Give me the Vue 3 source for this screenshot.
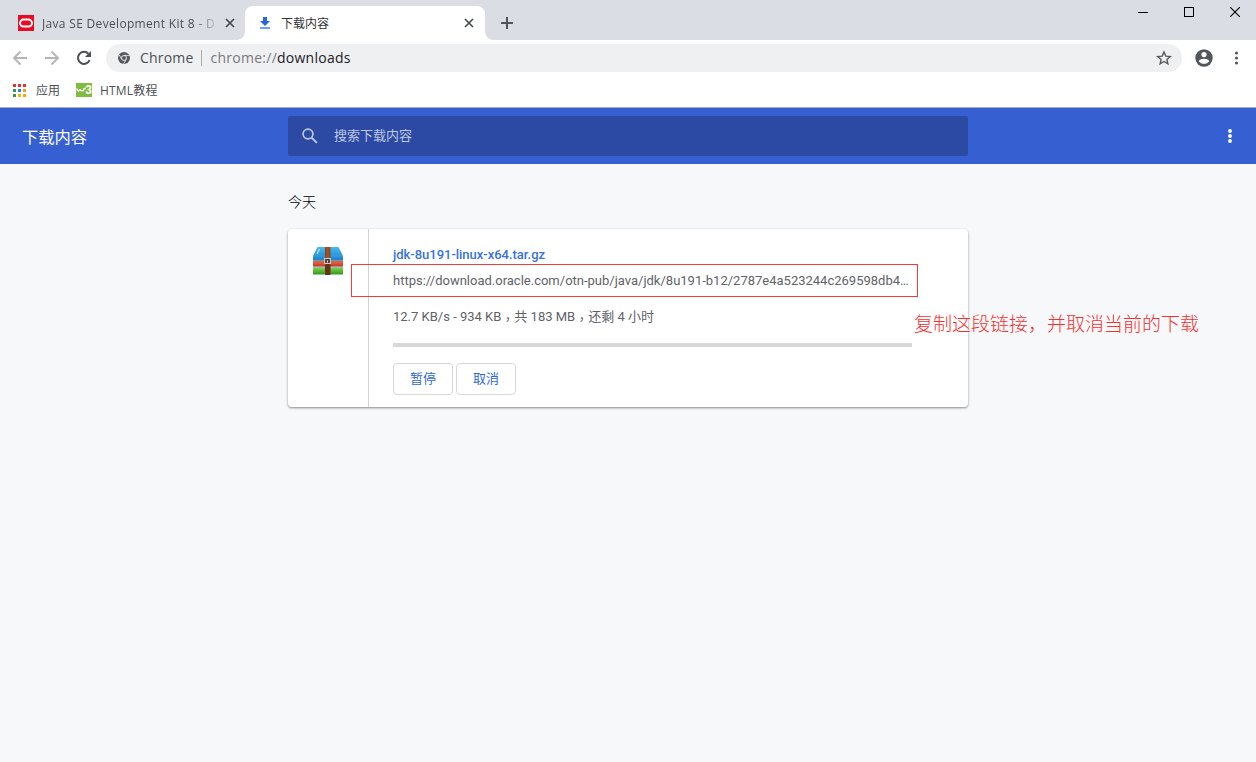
<template>
    <div class="window">
        <div class="tab-strip">
            <div class="tab">
                <svg class="favicon" width="16" height="16" viewBox="0 0 16 16">
                    <rect width="16" height="16" fill="#e60d22" />
                    <rect x="2" y="4.6" width="12" height="7" rx="3.5" fill="none" stroke="#fff" stroke-width="2" />
                </svg>
                <span class="tab-title faded">Java SE Development Kit 8 - D</span>
                <svg class="tab-close" width="10" height="10" viewBox="0 0 10 10">
                    <path d="M1 1l8 8M9 1l-8 8" stroke="#45494d" stroke-width="1.7" />
                </svg>
            </div>
            <div class="tab active">
                <svg class="favicon" width="16" height="16" viewBox="0 0 16 16">
                    <path d="M6 2h4v4h3l-5 5-5-5h3z" fill="#2a66e0" />
                    <path d="M3 12.2h10v1.6H3z" fill="#4d84ec" />
                </svg>
                <span class="tab-title">下载内容</span>
                <svg class="tab-close" width="10" height="10" viewBox="0 0 10 10">
                    <path d="M1 1l8 8M9 1l-8 8" stroke="#45494d" stroke-width="1.6" />
                </svg>
            </div>
            <svg class="new-tab" width="12" height="12" viewBox="0 0 12 12">
                <path d="M6 0v12M0 6h12" stroke="#505357" stroke-width="2" />
            </svg>
            <div class="window-controls">
                <svg width="10" height="10" viewBox="0 0 10 10"><path d="M0 5.5h10" stroke="#000" /></svg>
                <svg width="10" height="10" viewBox="0 0 10 10"><rect x=".5" y=".5" width="9" height="9" fill="none" stroke="#000" /></svg>
                <svg width="10" height="10" viewBox="0 0 10 10"><path d="M0 0l10 10M10 0L0 10" stroke="#000" stroke-width="1.1" /></svg>
            </div>
        </div>

        <div class="toolbar">
            <svg class="nav-btn" width="16" height="16" viewBox="0 0 16 16">
                <path d="M15 8H2M8.5 1.5L2 8l6.5 6.5" fill="none" stroke="#b4b5b7" stroke-width="1.9" />
            </svg>
            <svg class="nav-btn" width="16" height="16" viewBox="0 0 16 16">
                <path d="M1 8h13M7.5 1.5L14 8l-6.5 6.5" fill="none" stroke="#b4b5b7" stroke-width="1.9" />
            </svg>
            <svg class="nav-btn" width="16" height="16" viewBox="0 0 16 16">
                <path d="M13.6 10A6 6 0 1 1 12.4 3.8" fill="none" stroke="#4c5054" stroke-width="2" />
                <path d="M15 1v6H9z" fill="#4c5054" />
            </svg>
            <div class="omnibox">
                <svg width="12" height="12" viewBox="0 0 12 12">
                    <circle cx="6" cy="6" r="6" fill="#565a5e" />
                    <circle cx="6" cy="6" r="2.5" fill="none" stroke="#eff0f2" stroke-width=".9" />
                    <path d="M6 3.4h5.4M3.7 7.2L1.1 2.8M8.2 7.3L5.6 11.8" stroke="#eff0f2" stroke-width=".8" />
                </svg>
                <span class="origin">Chrome</span>
                <span class="separator"></span>
                <span class="url">chrome://<b>downloads</b></span>
                <svg class="star" width="16" height="16" viewBox="0 0 16 16">
                    <path d="M8 2l1.8 4.1 4.5.4-3.4 2.9 1 4.4L8 11.5l-3.9 2.3 1-4.4L1.7 6.5l4.5-.4z" fill="none" stroke="#55595d" stroke-width="1.4" />
                </svg>
            </div>
            <svg class="avatar" width="18" height="18" viewBox="0 0 18 18">
                <circle cx="9" cy="9" r="8.7" fill="#51565b" />
                <circle cx="9" cy="5.6" r="2.6" fill="#fff" />
                <path d="M3.8 12.2c0-3.4 10.4-3.4 10.4 0C11.9 15.6 6.1 15.6 3.8 12.2z" fill="#fff" />
            </svg>
            <svg class="menu" width="5" height="14" viewBox="0 0 5 14">
                <circle v-for="y in dots" :key="y" cx="2.5" :cy="y" r="1.6" fill="#55595d" />
            </svg>
        </div>

        <div class="bookmarks">
            <svg class="apps" width="13" height="13" viewBox="0 0 13 13">
                <rect v-for="(color, i) in appColors" :key="i" :x="(i % 3) * 5" :y="Math.floor(i / 3) * 5" width="3" height="3" :fill="color" />
            </svg>
            <span class="apps-label">应用</span>
            <svg class="w3" width="16" height="14" viewBox="0 0 16 14">
                <rect width="16" height="14" fill="#80bd3e" />
                <path d="M.8 5.5c.4 3 2.700 3 3.300.6.6 2.400 3.200 2.400 4-.4l1.600-.4" fill="none" stroke="#fff" stroke-width="1.5" />
                <text x="9.3" y="11.3" class="w3-digit">3</text>
            </svg>
            <span class="bookmark-label">HTML教程</span>
        </div>

        <div class="page-header">
            <h1>下载内容</h1>
            <div class="search">
                <svg width="18" height="18" viewBox="0 0 18 18">
                    <circle cx="7" cy="7" r="4.9" fill="none" stroke="#bec8e5" stroke-width="1.7" />
                    <path d="M10.6 10.6l5.3 5.3" stroke="#bec8e5" stroke-width="2" />
                </svg>
                <span>搜索下载内容</span>
            </div>
            <svg class="page-menu" width="4" height="14" viewBox="0 0 4 14">
                <circle v-for="y in dots" :key="y" cx="2" :cy="y" r="1.9" fill="#fff" />
            </svg>
        </div>

        <div class="content">
            <h2>今天</h2>
            <div class="card">
                <div class="icon-wrapper">
                    <svg width="32" height="30" viewBox="0 0 32 30">
                        <defs>
                            <linearGradient id="blue" x2="0" y2="1"><stop stop-color="#48b9ee" /><stop offset="1" stop-color="#1b80cb" /></linearGradient>
                            <linearGradient id="red" x2="0" y2="1"><stop stop-color="#ee6a4a" /><stop offset="1" stop-color="#c03a26" /></linearGradient>
                            <linearGradient id="green" x2="0" y2="1"><stop stop-color="#82d34c" /><stop offset="1" stop-color="#309722" /></linearGradient>
                        </defs>
                        <path d="M5.5 1h21L31 10v4.500H1V10z" fill="url(#blue)" />
                        <path d="M1 10h30" stroke="#4db2ea" stroke-width=".5" />
                        <path d="M5 8l2.5-5" stroke="#b6e8ff" stroke-width="1.3" />
                        <path d="M1 15h30v5.500H1z" fill="url(#red)" />
                        <path d="M1 21.500h30V28.500H1z" fill="url(#green)" />
                        <path d="M1 14.800h30M1 21h30" stroke="#59616b" stroke-width=".6" />
                        <path d="M13.300 1h4.700v12h-4.700z" fill="#a3501d" />
                        <path d="M13 13h5.300v16H13z" fill="#66301e" />
                        <path d="M13.500 1v28M18 1v28" stroke="#753713" stroke-width=".7" />
                        <rect x="12.600" y="12.500" width="5.800" height="5" fill="#50372d" stroke="#d2cbc4" stroke-width="1.100" />
                        <path d="M15.500 14.500v2" stroke="#eee" />
                    </svg>
                </div>
                <div class="details">
                    <a class="file-name">jdk-8u191-linux-x64.tar.gz</a>
                    <div class="file-url">https://download.oracle.com/otn-pub/java/jdk/8u191-b12/2787e4a523244c269598db4…</div>
                    <div class="status">12.7 KB/s - 934 KB<i>，</i>共 183 MB<i>，</i>还剩 4 小时</div>
                    <div class="progress"></div>
                    <div class="actions">
                        <button>暂停</button>
                        <button>取消</button>
                    </div>
                </div>
                <div class="highlight"></div>
                <div class="note">复制这段链接，并取消当前的下载</div>
            </div>
        </div>
    </div>
</template>

<script setup>
const dots = [2, 7, 12]
const appColors = [
    '#e8312c', '#e8312c', '#e8312c',
    '#2e9b4b', '#2f80ed', '#f29c1f',
    '#2e9b4b', '#fbb40f', '#f5a30b',
]
</script>

<style>
body {
    background: #f7f8fa;
}
</style>

<style scoped>
.window {
    height: 762px;
    overflow: hidden;
    font-family: "Open Sans", "Noto Sans CJK SC", sans-serif;
    font-size: 12px;
    color: #4b4f53;
}
svg {
    display: block;
    flex: none;
}
.window * {
    box-sizing: border-box;
}
.tab-strip {
    display: flex;
    align-items: flex-end;
    height: 40px;
    padding-left: 5px;
    background: #dadde4;
}
.tab {
    display: flex;
    align-items: center;
    width: 240px;
    height: 34px;
    padding: 0 10px 0 13px;
}
.tab.active {
    position: relative;
    padding: 0 11px 0 12px;
    background: #fff;
    border-radius: 8px 8px 0 0;
    color: #333;
}
.tab.active::before,
.tab.active::after {
    content: "";
    position: absolute;
    bottom: 0;
    width: 8px;
    height: 8px;
}
.tab.active::before {
    left: -8px;
    background: radial-gradient(circle at 0 0, transparent 7.5px, #fff 8px);
}
.tab.active::after {
    right: -8px;
    background: radial-gradient(circle at 100% 0, transparent 7.5px, #fff 8px);
}
.tab-title {
    flex: 1;
    margin: 0 8px;
    padding-top: 2px;
    overflow: hidden;
    white-space: nowrap;
    line-height: 20px;
}
.faded {
    letter-spacing: 0.32px;
    -webkit-mask-image: linear-gradient(90deg, #000 153px, transparent 178px);
    mask-image: linear-gradient(90deg, #000 153px, transparent 178px);
}
.new-tab {
    margin: 0 0 11px 16px;
}
.window-controls {
    display: flex;
    align-self: flex-start;
    gap: 36px;
    margin-left: auto;
    padding: 7px 16px 0 0;
}
.toolbar {
    display: flex;
    align-items: center;
    height: 36px;
    padding-left: 12px;
    background: #fff;
}
.nav-btn {
    margin-right: 16px;
}
.omnibox {
    display: flex;
    align-items: center;
    width: 1076px;
    height: 28px;
    margin-left: -2px;
    padding: 0 10px 0 12px;
    border-radius: 14px;
    background: #eff0f2;
    font-size: 14px;
}
.origin {
    margin-left: 10px;
    padding-bottom: 2px;
    letter-spacing: 0.2px;
}
.separator {
    width: 1px;
    height: 16px;
    margin: 0 9px 0 7px;
    background: #a7a9ac;
}
.url {
    padding-bottom: 2px;
    color: #77797c;
    letter-spacing: 0.25px;
}
.url b {
    font-weight: 400;
    color: #202124;
}
.star {
    margin-left: auto;
}
.avatar {
    margin-left: 13px;
}
.menu {
    margin-left: 21px;
}
.bookmarks {
    display: flex;
    align-items: center;
    height: 32px;
    padding: 0 0 3px 13px;
    border-bottom: 1px solid #a9abb0;
    background: #fff;
}
.apps-label {
    margin: 0 16px 0 10px;
}
.w3 {
    margin-right: 8px;
}
.w3-digit {
    font: bold 12px "Liberation Sans", sans-serif;
    fill: #fff;
}
.bookmark-label {
    letter-spacing: 0.2px;
}
.page-header {
    display: flex;
    align-items: center;
    height: 56px;
    padding-left: 22px;
    background: #3660d1;
    color: #fff;
    font-family: Roboto, "Noto Sans CJK SC", sans-serif;
}
h1 {
    width: 266px;
    margin: 0;
    padding-top: 3px;
    font-size: 16.3px;
    font-weight: 400;
    line-height: 24px;
}
.search {
    display: flex;
    align-items: center;
    gap: 15px;
    width: 680px;
    height: 40px;
    padding-left: 13px;
    border-radius: 2px;
    background: #2c4aa4;
    color: #bec8e5;
    font-size: 13px;
}
.search span {
    padding-bottom: 4px;
}
.page-menu {
    margin: 0 24px 0 auto;
}
.content {
    width: 680px;
    margin: 0 auto;
    padding-top: 28px;
    font-family: Roboto, "Noto Sans CJK SC", sans-serif;
}
h2 {
    margin: 0 0 17px;
    color: #000;
    font-size: 14px;
    font-weight: 300;
    line-height: 20px;
}
.card {
    position: relative;
    display: flex;
    height: 178px;
    border-radius: 4px;
    background: #fff;
    box-shadow: 0 1px 2px rgba(60, 64, 67, 0.45), 0 1px 3px rgba(60, 64, 67, 0.2);
}
.icon-wrapper {
    width: 81px;
    padding: 17px 0 0 24px;
    border-right: 1px solid #d2d3d5;
}
.details {
    padding: 16px 0 0 24px;
    color: #5f6368;
    font-size: 13px;
    line-height: 20px;
}
.file-name {
    display: block;
    color: #3871e0;
    font-weight: 500;
    letter-spacing: -0.02px;
}
.file-url {
    margin-top: 6px;
    white-space: nowrap;
}
.status {
    height: 20px;
    margin-top: 16px;
    white-space: nowrap;
}
/* centred full-width comma */
.status i {
    display: inline-block;
    height: 14px;
    font-family: "Noto Sans CJK TC", sans-serif;
    font-style: normal;
    line-height: 14px;
    vertical-align: -3px;
}
.progress {
    width: 519px;
    height: 4px;
    margin-top: 16px;
    background: #d8d8d8;
}
.actions {
    display: flex;
    gap: 3px;
    margin-top: 16px;
}
button {
    width: 60px;
    height: 32px;
    padding: 0 0 4px;
    border: 1px solid #d6d8dc;
    border-radius: 4px;
    background: #fff;
    color: #3069db;
    font-family: inherit;
    font-size: 13px;
}
/* annotation drawn over the card */
.highlight {
    position: absolute;
    left: 63px;
    top: 35px;
    width: 567px;
    height: 33px;
    border: 1px solid #f23c3c;
}
.note {
    position: absolute;
    left: 626px;
    top: 82px;
    color: #fa3030;
    font-family: "Liberation Serif", "Noto Sans CJK SC", serif;
    font-size: 19px;
    font-weight: 300;
    line-height: 28px;
    white-space: nowrap;
}
</style>
